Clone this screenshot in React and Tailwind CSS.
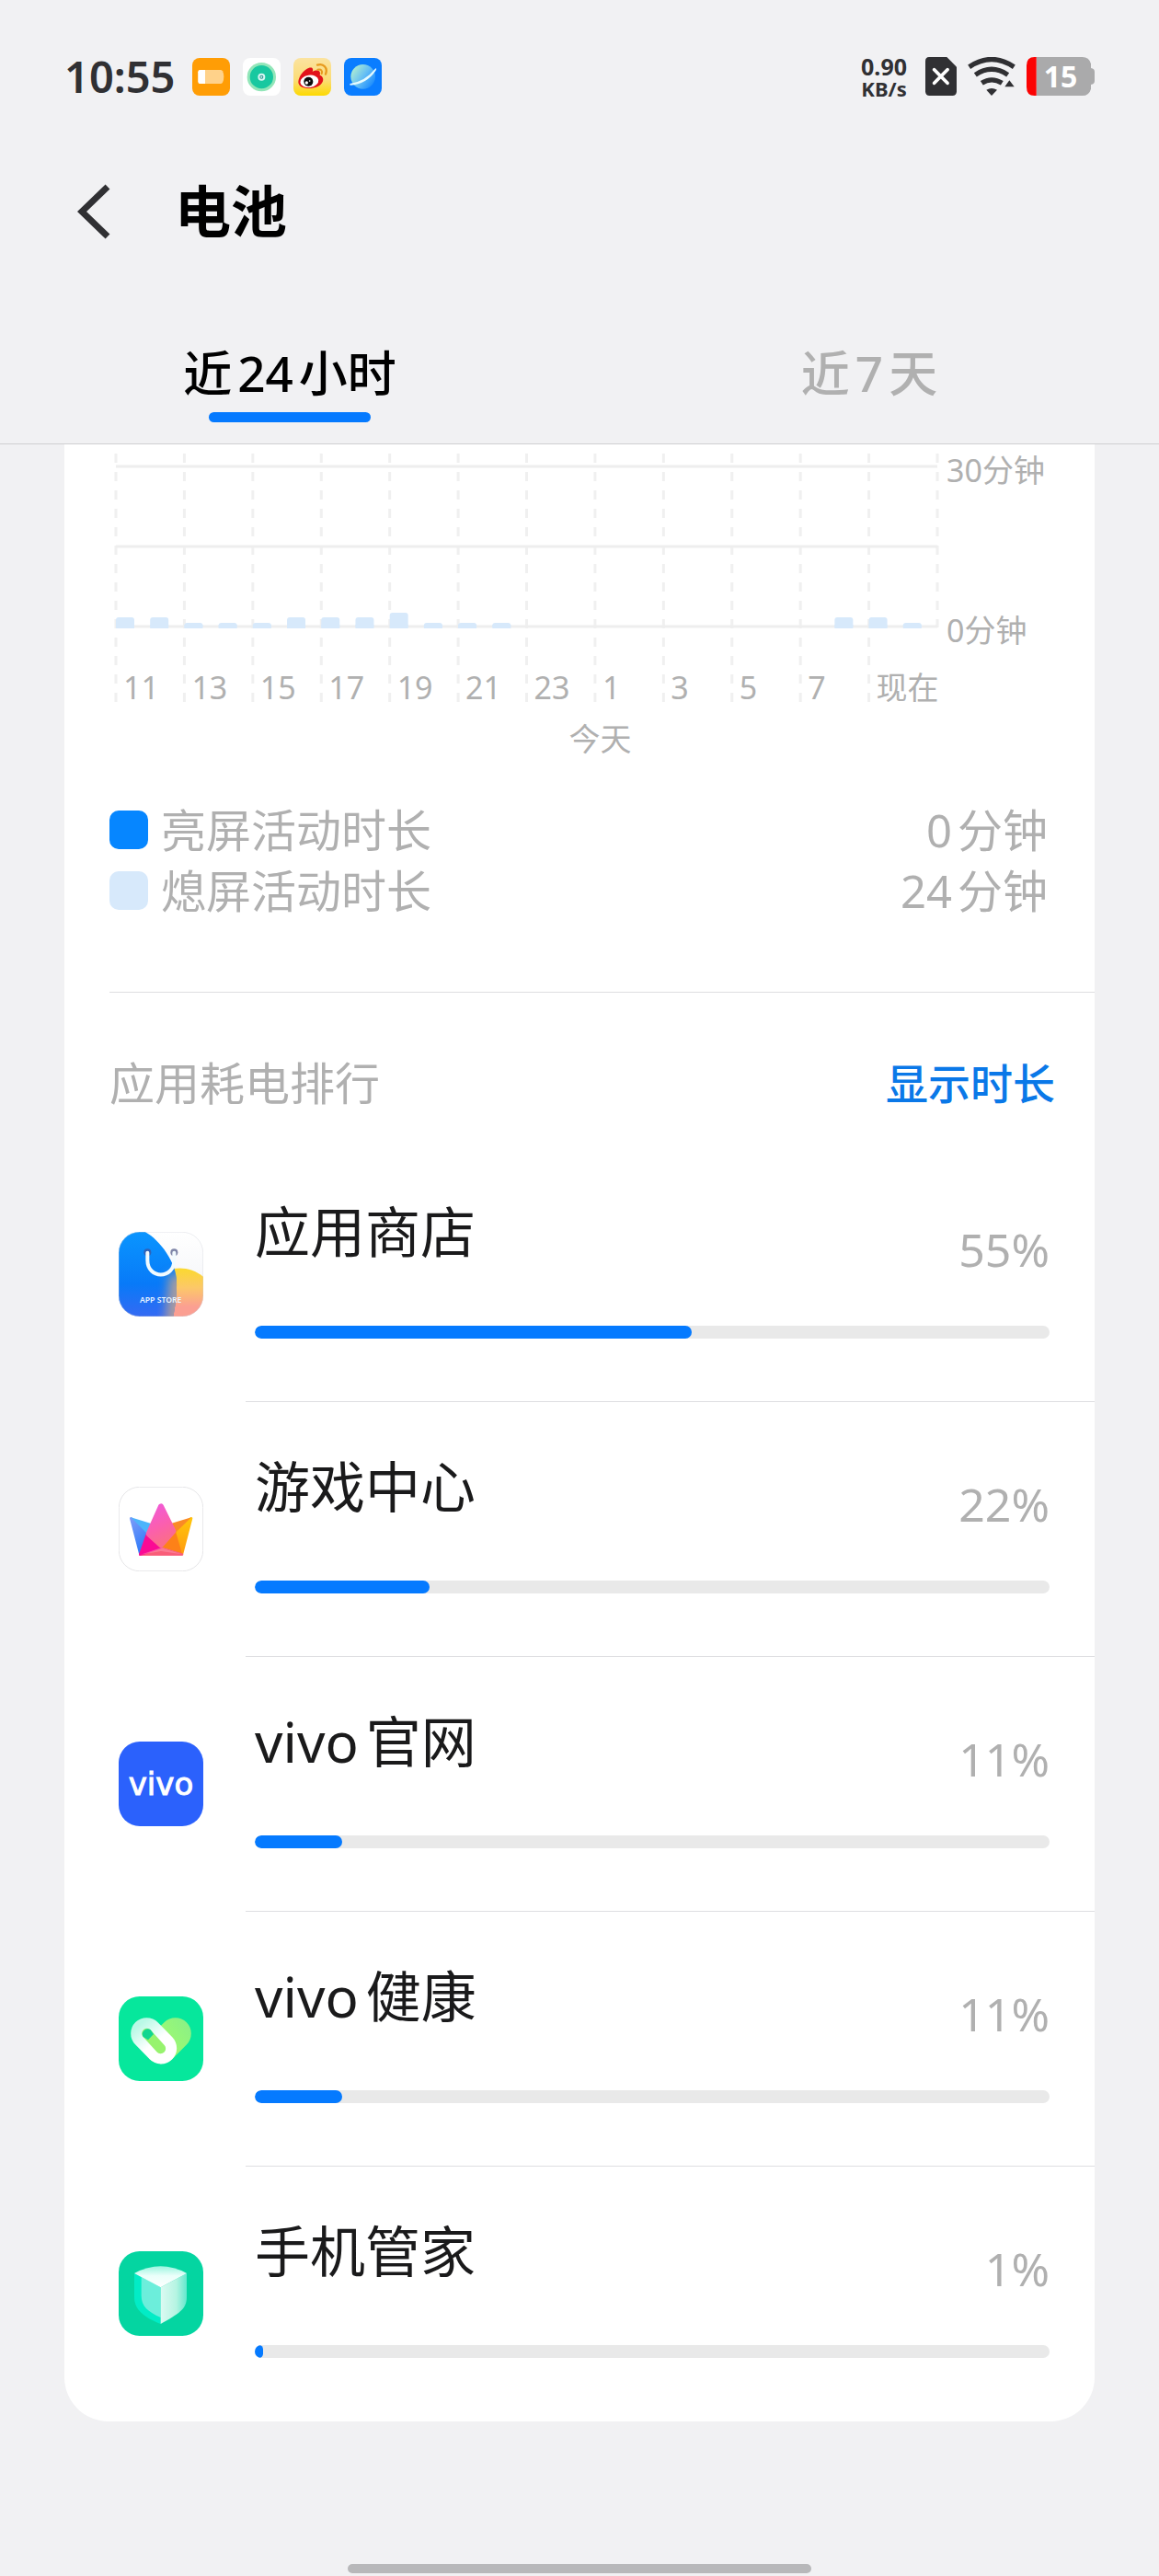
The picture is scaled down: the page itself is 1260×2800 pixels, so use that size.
import React from "react";

/* ---------- status bar icons ---------- */

function BatteryAppIcon() {
  return (
    <svg viewBox="0 0 123 123" className="size-[41px]" aria-hidden="true">
      <rect width="123" height="123" rx="24" fill="#ff9d05" />
      <path d="M26 39H92Q96 39 99 43Q103 50 103 61Q103 73 99 80Q96 84 92 84H26Q19 84 19 77V46Q19 39 26 39Z" fill="#ffd28a" />
      <path d="M26 39H42V84H26Q19 84 19 77V46Q19 39 26 39Z" fill="#fff" />
    </svg>
  );
}

function TargetAppIcon() {
  return (
    <svg viewBox="0 0 123 123" className="size-[41px]" aria-hidden="true">
      <rect width="123" height="123" rx="24" fill="#fff" />
      <circle cx="61" cy="62" r="47" fill="#93e6b9" />
      <circle cx="61" cy="62" r="38" fill="#18c8a0" />
      <circle cx="61" cy="62" r="9" fill="#2f8f8c" stroke="#d5f7f3" strokeWidth="6" />
      <circle cx="61" cy="62" r="3" fill="#d5f7f3" />
    </svg>
  );
}

function WeiboIcon() {
  return (
    <svg viewBox="0 0 123 123" className="size-[41px]" aria-hidden="true">
      <defs>
        <linearGradient id="weibo-bg" x1="0" y1="0" x2="0" y2="1">
          <stop offset="0" stopColor="#fbe3a0" />
          <stop offset="0.6" stopColor="#fbdc74" />
          <stop offset="1" stopColor="#fdd900" />
        </linearGradient>
      </defs>
      <rect width="123" height="123" rx="24" fill="url(#weibo-bg)" />
      <path d="M16 78C17 60 33 38 51 32C62 29 66 36 62 45C76 37 91 40 86 56C97 60 99 70 95 78C89 92 68 100 46 99C28 98 16 91 16 78Z" fill="#e2121a" />
      <ellipse cx="52" cy="76" rx="30" ry="20" fill="#fff" transform="rotate(-8 52 76)" />
      <circle cx="49" cy="77" r="15" fill="#0c0c0c" />
      <circle cx="43" cy="81" r="5" fill="#fff" />
      <circle cx="53" cy="75" r="2.500" fill="#fff" />
      <path d="M78 23C98 16 113 33 105 53" fill="none" stroke="#e79a1e" strokeWidth="7" strokeLinecap="round" />
      <path d="M79 38C90 35 96 42 92 51" fill="none" stroke="#e79a1e" strokeWidth="6" strokeLinecap="round" />
    </svg>
  );
}

function BrowserIcon() {
  return (
    <svg viewBox="0 0 123 123" className="size-[41px]" aria-hidden="true">
      <defs>
        <linearGradient id="planet" x1="0" y1="0.200" x2="1" y2="0.900">
          <stop offset="0" stopColor="#b5f0cf" />
          <stop offset="0.500" stopColor="#63bdf5" />
          <stop offset="1" stopColor="#0a80ff" />
        </linearGradient>
      </defs>
      <rect width="123" height="123" rx="24" fill="#0a7dff" />
      <circle cx="62" cy="61" r="40" fill="url(#planet)" />
      <path d="M19 84Q68 78 103 34Q108 34 103 42Q73 86 20 89Z" fill="#e6fbff" />
    </svg>
  );
}

function SimIcon() {
  return (
    <svg viewBox="0 0 102 126" className="h-[42px] w-[34px]" aria-hidden="true">
      <path d="M12 0H70L102 32V112Q102 126 88 126H14Q0 126 0 112V14Q0 0 12 0Z" fill="#303033" />
      <path d="M29 41L72 85M72 41L29 85" stroke="#fff" strokeWidth="11" strokeLinecap="round" />
    </svg>
  );
}

function WifiIcon() {
  return (
    <svg viewBox="0 0 156 126" className="h-[42px] w-[52px]" aria-hidden="true">
      <g fill="none" stroke="#303033" strokeWidth="16">
        <path d="M5 32Q78 -17 151 32" />
        <path d="M25 58Q78 22 131 58" />
        <path d="M46 85Q78 64 112 85" />
      </g>
      <path d="M61 107Q78 97 96 107L78 126Z" fill="#303033" />
      <path d="M121 97L136 76L152 97Z" fill="#303033" />
    </svg>
  );
}

function BatteryLevel() {
  return (
    <div className="relative h-[42px] w-[74px]" role="img" aria-label="15">
      <svg viewBox="0 0 222 126" className="absolute inset-0 size-full" aria-hidden="true">
        <path d="M32 0H182Q204 0 210 22V36Q222 38 222 48V78Q222 88 210 90V104Q204 126 182 126H32Z" fill="#aaaaab" />
        <path d="M32 0V126H26Q0 126 0 98V28Q0 0 26 0Z" fill="#fb0303" />
      </svg>
      <span className="absolute inset-0 flex items-center justify-center text-[32px] leading-none font-bold text-white">15</span>
    </div>
  );
}

/* ---------- app icons ---------- */

function AppStoreIcon() {
  return (
    <svg viewBox="0 0 276 276" className="size-[92px]" aria-hidden="true">
      <defs>
        <clipPath id="store-clip">
          <rect width="276" height="276" rx="68" />
        </clipPath>
        <clipPath id="store-blue-clip">
          <path d="M-10 -10H60C115 0 188 90 189 160C190 205 186 240 175 290H-10Z" />
        </clipPath>
        <linearGradient id="store-bg" x1="0" y1="0" x2="0" y2="1">
          <stop offset="0" stopColor="#ffffff" />
          <stop offset="1" stopColor="#f0f1f6" />
        </linearGradient>
        <linearGradient id="store-blue" x1="0.300" y1="0" x2="0.300" y2="1">
          <stop offset="0" stopColor="#0a97ff" />
          <stop offset="0.600" stopColor="#087af8" />
          <stop offset="1" stopColor="#3b68f2" />
        </linearGradient>
        <linearGradient id="store-warm" x1="0" y1="0" x2="0" y2="1">
          <stop offset="0" stopColor="#fbd92f" />
          <stop offset="0.400" stopColor="#fcc868" />
          <stop offset="0.800" stopColor="#fb9f92" />
          <stop offset="1" stopColor="#fb9f92" />
        </linearGradient>
        <filter id="store-soft" x="-30%" y="-30%" width="160%" height="160%">
          <feGaussianBlur stdDeviation="16" />
        </filter>
      </defs>
      <g clipPath="url(#store-clip)">
        <rect width="276" height="276" fill="url(#store-bg)" />
        <path d="M120 276V160C150 110 225 105 276 146V276Z" fill="url(#store-warm)" />
        <path d="M-10 -10H60C115 0 188 90 189 160C190 205 186 240 175 290H-10Z" fill="url(#store-blue)" />
        <g clipPath="url(#store-blue-clip)">
          <path d="M150 310C158 250 160 190 165 140H230V310Z" fill="#c0a290" fillOpacity="0.850" filter="url(#store-soft)" />
        </g>
      </g>
      <rect x="1" y="1" width="274" height="274" rx="67" fill="none" stroke="#c9cdd6" strokeOpacity="0.500" strokeWidth="2" />
      <circle cx="94" cy="67" r="12" fill="#2f62b8" />
      <circle cx="181" cy="67" r="12" fill="#7f86a8" />
      <path d="M94 68V92C94 155 181 155 181 92V68" fill="none" stroke="#f2fbff" strokeWidth="12" strokeLinecap="round" />
      <text x="137" y="232" textAnchor="middle" fontFamily="'Noto Sans', sans-serif" fontSize="26" fontWeight="600" fill="#e9f4ff">APP STORE</text>
    </svg>
  );
}

function GameCenterIcon() {
  return (
    <svg viewBox="0 0 276 276" className="size-[92px]" aria-hidden="true">
      <defs>
        <linearGradient id="crown-pink" x1="0" y1="0" x2="0.300" y2="1">
          <stop offset="0" stopColor="#f05ad8" />
          <stop offset="0.600" stopColor="#fb5fae" />
          <stop offset="1" stopColor="#fb6c8c" />
        </linearGradient>
        <linearGradient id="crown-blue" x1="0" y1="0" x2="0.400" y2="1">
          <stop offset="0" stopColor="#7b9bf8" />
          <stop offset="1" stopColor="#2f7bfa" />
        </linearGradient>
        <linearGradient id="crown-yellow" x1="0" y1="0" x2="0" y2="1">
          <stop offset="0" stopColor="#ffc60a" />
          <stop offset="1" stopColor="#ff9b10" />
        </linearGradient>
      </defs>
      <rect x="1" y="1" width="274" height="274" rx="67" fill="#fff" stroke="#e6e6e8" strokeWidth="3" />
      <g strokeLinejoin="round">
        <path d="M40 103L70 218L100 150Z" fill="url(#crown-blue)" stroke="url(#crown-blue)" strokeWidth="8" />
        <path d="M40 100L108 121L92 152Z" fill="#4cb4fb" />
        <path d="M237 103L207 218L176 150Z" fill="url(#crown-yellow)" stroke="url(#crown-yellow)" strokeWidth="8" />
        <path d="M237 100L168 121L186 149Z" fill="#fa8a26" />
        <path d="M186 146L207 219L138 197Z" fill="#fd8118" />
        <path d="M138 200L207 221L70 221Z" fill="#f95e7a" stroke="#f95e7a" strokeWidth="8" />
        <path d="M92 158L136 199L70 221Z" fill="#fa0a94" stroke="#fa0a94" strokeWidth="8" />
        <path d="M138 64L98 154L138 190L178 145Z" fill="url(#crown-pink)" stroke="url(#crown-pink)" strokeWidth="18" />
        <path d="M138 199L72 221L138 210L205 220Z" fill="#fda0b4" fillOpacity="0.450" />
      </g>
    </svg>
  );
}

function VivoIcon() {
  return (
    <svg viewBox="0 0 92 92" className="size-[92px]" aria-hidden="true">
      <rect width="92" height="92" rx="23" fill="#2b61fc" />
      <text x="46" y="58" textAnchor="middle" fontFamily="'DejaVu Sans', sans-serif" fontSize="34" fill="#fff" stroke="#fff" strokeWidth="1">vivo</text>
    </svg>
  );
}

function HealthIcon() {
  return (
    <svg viewBox="0 0 276 276" className="size-[92px]" aria-hidden="true">
      <defs>
        <linearGradient id="health-loop" gradientUnits="userSpaceOnUse" x1="70" y1="90" x2="150" y2="190">
          <stop offset="0" stopColor="#b9f9e6" />
          <stop offset="0.600" stopColor="#ffffff" />
        </linearGradient>
        <linearGradient id="health-leaf" gradientUnits="userSpaceOnUse" x1="130" y1="160" x2="220" y2="90">
          <stop offset="0" stopColor="#a2fb6c" />
          <stop offset="1" stopColor="#8cf184" />
        </linearGradient>
      </defs>
      <rect width="276" height="276" rx="68" fill="#06e79c" />
      <g fill="none" strokeLinecap="round">
        <path d="M185 121L138 168" stroke="url(#health-leaf)" strokeWidth="103" />
        <path d="M91 121L138 169" stroke="url(#health-loop)" strokeWidth="103" />
        <path d="M92 121L137 170" stroke="#97f36e" strokeWidth="33" />
      </g>
      <path d="M96 142L80 132A17 17 0 0 1 104 109L114 123Z" fill="#10d690" />
    </svg>
  );
}

function ManagerIcon() {
  return (
    <svg viewBox="0 0 276 276" className="size-[92px]" aria-hidden="true">
      <defs>
        <linearGradient id="cube-right" x1="0" y1="0" x2="1" y2="0">
          <stop offset="0" stopColor="#dcfaf2" />
          <stop offset="0.600" stopColor="#b5f4e2" />
          <stop offset="1" stopColor="#62e8cd" />
        </linearGradient>
        <linearGradient id="cube-top" x1="0" y1="0" x2="0" y2="1">
          <stop offset="0" stopColor="#9cf5e0" />
          <stop offset="0.450" stopColor="#eafffa" />
          <stop offset="1" stopColor="#ffffff" />
        </linearGradient>
      </defs>
      <rect width="276" height="276" rx="68" fill="#04d5a1" />
      <path d="M51 72L137 118V237C82 216 51 190 51 150Z" fill="#02ecc6" />
      <path d="M74 84L137 118V216C95 198 74 180 74 145Z" fill="#6ceedb" />
      <path d="M222 72L137 118V237C195 204 222 190 222 150Z" fill="url(#cube-right)" />
      <path d="M51 72Q137 26 222 72L137 118Z" fill="url(#cube-top)" />
    </svg>
  );
}

/* ---------- data ---------- */

const apps = [
  { name: "应用商店", percent: 55, Icon: AppStoreIcon },
  { name: "游戏中心", percent: 22, Icon: GameCenterIcon },
  { latin: "vivo", name: "官网", percent: 11, Icon: VivoIcon },
  { latin: "vivo", name: "健康", percent: 11, Icon: HealthIcon },
  { name: "手机管家", percent: 1, Icon: ManagerIcon },
];

const hours = ["11", "13", "15", "17", "19", "21", "23", "1", "3", "5", "7", "现在"];

// Screen-off activity for each hour: bar height in pixels.
const bars = [12, 12, 6, 6, 6, 12, 12, 12, 17, 6, 6, 6, 0, 0, 0, 0, 0, 0, 0, 0, 0, 12, 12, 6];

/* ---------- sections ---------- */

function StatusBar() {
  return (
    <div className="flex h-[166px] items-center justify-between px-[70px] text-[#303033]">
      <div className="flex items-center gap-[14px]">
        <span className="mr-1 text-[47px] leading-none font-semibold">10:55</span>
        <BatteryAppIcon />
        <TargetAppIcon />
        <WeiboIcon />
        <BrowserIcon />
      </div>
      <div className="flex items-center gap-3">
        <div className="mr-2 flex flex-col items-center font-bold">
          <span className="text-[25px] leading-[26px]">0.90</span>
          <span className="text-[22px] leading-[22px]">KB/s</span>
        </div>
        <SimIcon />
        <WifiIcon />
        <BatteryLevel />
      </div>
    </div>
  );
}

function UsageChart() {
  return (
    <div className="flex pl-14">
      <div className="flex-1">
        <div className="relative flex h-[280px] flex-col justify-end">
          <svg className="absolute inset-0 size-full overflow-visible" aria-hidden="true">
            <g stroke="#f0f0f0" strokeWidth="3" strokeDasharray="10 10">
              {hours.map((h, i) => (
                <line key={h} x1={`${(i * 100) / 12}%`} x2={`${(i * 100) / 12}%`} y1="10" y2="280" />
              ))}
              <line x1="100%" x2="100%" y1="10" y2="199" />
            </g>
            <g stroke="#eeeeee" strokeWidth="3">
              <line x1="0" x2="100%" y1="24" y2="24" />
              <line x1="0" x2="100%" y1="111" y2="111" />
              <line x1="0" x2="100%" y1="198" y2="198" />
            </g>
            {bars.map((h, i) =>
              h ? (
                <g key={i} fill="#d7e9fb">
                  <rect x={`${(i * 100) / 24}%`} y={200 - h} width="20" height={h} rx="3" />
                  <rect x={`${(i * 100) / 24}%`} y="196" width="20" height="4" />
                </g>
              ) : null
            )}
          </svg>
          <div className="relative grid grid-cols-12 text-[34px] leading-8">
            {hours.map((h) => (
              <span key={h} className="pl-2 whitespace-nowrap">{h}</span>
            ))}
          </div>
        </div>
        <div className="mt-5 pl-40 text-center text-[34px] leading-10">今天</div>
      </div>
      <div className="flex w-[171px] flex-col gap-[134px] pt-2 pl-[10px] text-[34px] leading-10">
        <span>30分钟</span>
        <span>0分钟</span>
      </div>
    </div>
  );
}

function LegendRow({ swatch, label, value }) {
  return (
    <div className="flex h-[66px] items-center justify-between text-[49px] leading-none">
      <span className="flex items-center gap-[14px]">
        <span className={`size-[42px] rounded-[10px] ${swatch}`} />
        {label}
      </span>
      <span>
        <span className="mr-1.5">{value}</span>分钟
      </span>
    </div>
  );
}

function AppRow({ app, last }) {
  const { Icon, latin, name, percent } = app;
  return (
    <li className="flex h-[277px] pl-[59px]">
      <div className="pt-[92px]">
        <Icon />
      </div>
      <div className={`ml-[46px] flex-1 pr-[49px] pl-[10px] ${last ? "" : "border-b border-[#dedee1]"}`}>
        <div className="flex justify-between pt-[59px]">
          <span className="text-[60px] leading-[66px] text-[#1a1a1b]">
            {latin && <span className="mr-2">{latin}</span>}
            {name}
          </span>
          <span className="pt-5 text-[50px] leading-[64px]">{percent}%</span>
        </div>
        <div
          className="mt-[51px] h-[14px] overflow-hidden rounded-full bg-[#e9e9e9]"
          role="progressbar"
          aria-label={`${latin || ""}${name}`}
          aria-valuenow={percent}
          aria-valuemin={0}
          aria-valuemax={100}
        >
          <div className="h-full rounded-full bg-[#057aff]" style={{ width: `${percent}%` }} />
        </div>
      </div>
    </li>
  );
}

export default function App() {
  return (
    <div className="flex min-h-screen flex-col bg-[#f1f1f3] font-['Noto_Sans','Noto_Sans_CJK_SC',sans-serif] text-[#b0b0b0]">
      <header className="border-b border-[#cfcfd1]">
        <StatusBar />
        <div className="flex h-[128px] items-center pl-[84px]">
          <button type="button" aria-label="返回" className="flex h-16 w-[106px] items-center">
            <svg viewBox="0 0 36 60" className="h-[60px] w-9" aria-hidden="true">
              <path d="M33 3L5 30L33 57" fill="none" stroke="#303033" strokeWidth="7" />
            </svg>
          </button>
          <h1 className="text-[61px] leading-[58px] font-semibold text-black">电池</h1>
        </div>
        <nav className="grid grid-cols-2 text-[53px] font-medium">
          <button type="button" className="flex flex-col items-center pt-20 pb-[23px] leading-[64px] text-black">
            <span className="whitespace-nowrap">近<span className="mx-1.5">24</span>小时</span>
            <span className="mt-[10px] h-[11px] w-44 rounded-full bg-[#057aff]" />
          </button>
          <button type="button" className="flex flex-col items-center pt-20 leading-[64px]">
            <span className="whitespace-nowrap">近<span className="mx-1.5">7</span>天</span>
          </button>
        </nav>
      </header>

      <main className="mx-[70px] rounded-b-[48px] bg-white">
        <UsageChart />

        <div className="mt-[46px] ml-[49px] border-b border-[#dedee1] pr-[51px] pb-[77px]">
          <LegendRow swatch="bg-[#0686ff]" label="亮屏活动时长" value="0" />
          <LegendRow swatch="bg-[#d7e9fb]" label="熄屏活动时长" value="24" />
        </div>

        <section>
          <div className="flex h-[168px] items-center justify-between pt-7 pr-[43px] pl-[49px]">
            <h2 className="text-[49px] leading-none">应用耗电排行</h2>
            <button type="button" className="text-[46px] leading-none font-medium text-[#0a78e8]">显示时长</button>
          </div>
          <ul>
            {apps.map((app, i) => (
              <AppRow key={i} app={app} last={i === apps.length - 1} />
            ))}
          </ul>
        </section>
      </main>

      <div className="mx-auto mt-auto mb-[3px] h-[10px] w-[40%] rounded-full bg-[#b8b8ba]" />
    </div>
  );
}
